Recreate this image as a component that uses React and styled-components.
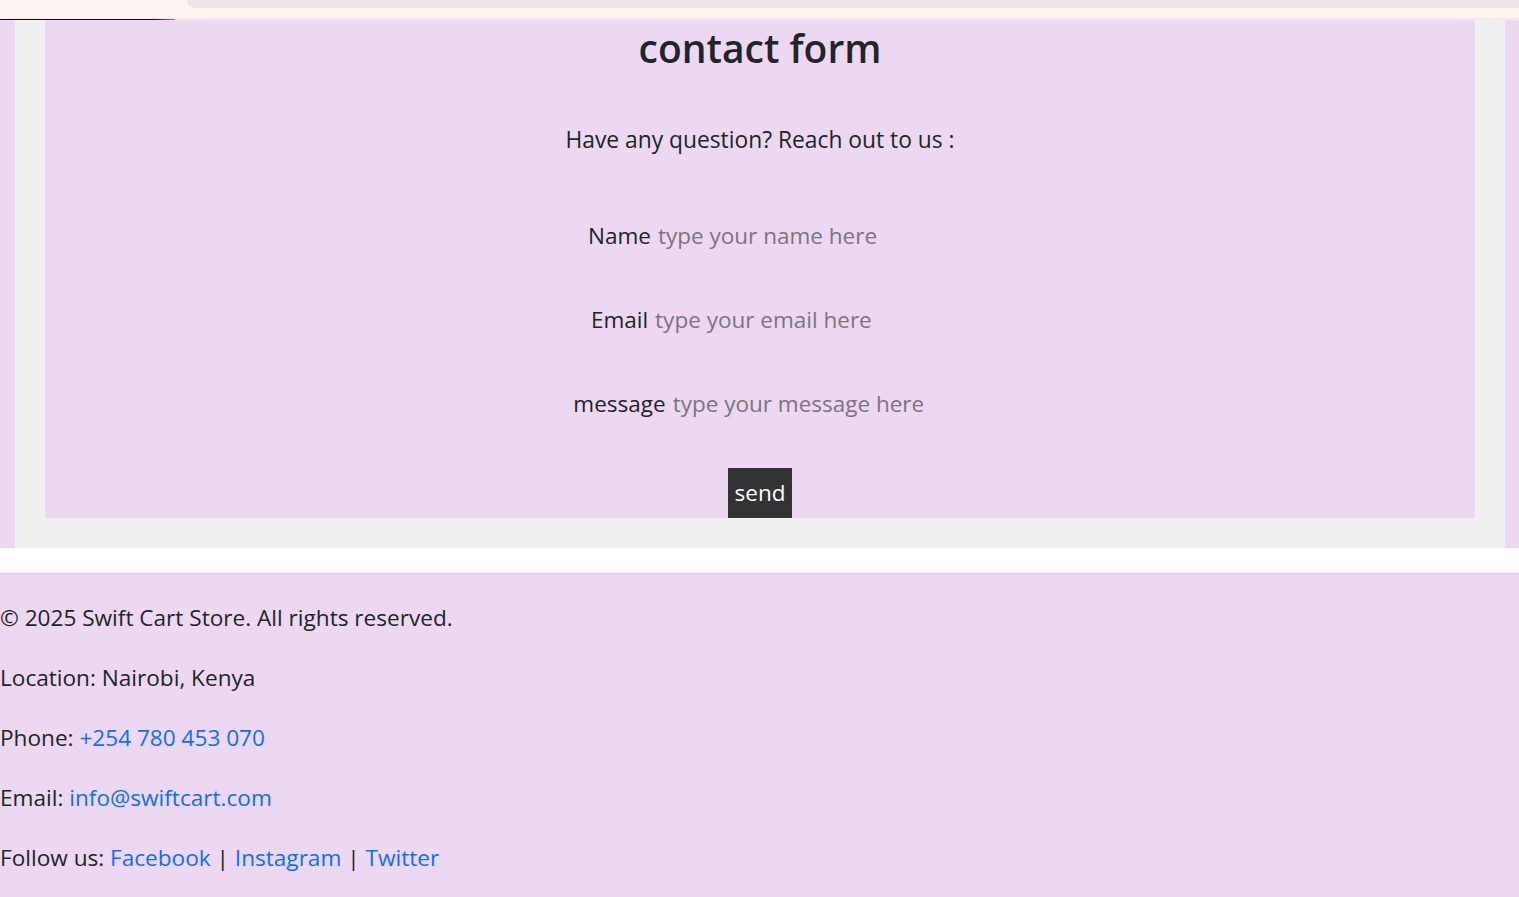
import React from "react";
import styled, { createGlobalStyle } from "styled-components";

const Global = createGlobalStyle`
  html, body { margin: 0; padding: 0; background: #ffffff; }
  body {
    font-family: "Open Sans", "Noto Sans", Arial, sans-serif;
    color: #212529;
  }
  * { box-sizing: border-box; }
`;

const TopBar = styled.header`
  display: flex;
  height: 19px;
  background: #fff5f3;
  border-bottom: 1px solid #f9e3e0;
`;

const TopSpacer = styled.div`
  width: 187px;
`;

const TopPill = styled.div`
  flex: 1;
  height: 8px;
  background: #f1e4e9;
  border-bottom-left-radius: 16px;
`;

const Rule = styled.div`
  display: flex;
  height: 1px;
  background: #eeeeee;
`;

const RuleMark = styled.div`
  width: 175px;
  background: linear-gradient(90deg, #141414 0%, #141414 88%, #b8787c 100%);
`;

const Outer = styled.div`
  background: #ecd8f0;
  padding: 0 14px 0 15px;
`;

const Section = styled.section`
  background: #f0f0f0;
  padding: 0 30px 30px;
`;

const FormBox = styled.form`
  background: #ecd8f0;
  display: flex;
  flex-direction: column;
  align-items: center;
  padding-top: 1px;
`;

const Title = styled.h1`
  margin: 0;
  font-size: 39px;
  line-height: 54px;
  font-weight: 600;
  color: #212529;
`;

const Lead = styled.p`
  margin: 50px 0 66px;
  font-size: 22.8px;
  line-height: 30px;
`;

const Row = styled.div`
  display: flex;
  align-items: baseline;
  justify-content: center;
  height: 30px;
  margin-bottom: ${(p) => (p.$last ? "49px" : "54px")};
`;

const Label = styled.label`
  font-size: 22.5px;
  line-height: 30px;
  margin-right: 5px;
  color: #212529;
`;

const Field = styled.input`
  width: 276px;
  font-family: inherit;
  font-size: 22.5px;
  line-height: 30px;
  padding: 0 2px;
  border: none;
  outline: none;
  background: transparent;
  color: #212529;
  &::placeholder { color: #7a7580; opacity: 1; }
`;

const Send = styled.button`
  font-family: inherit;
  font-size: 22.5px;
  line-height: 30px;
  padding: 10px 7px;
  border: none;
  background: #333333;
  color: #ffffff;
  cursor: pointer;
`;

const Footer = styled.footer`
  margin-top: 25px;
  border-top: 1px solid #dccade;
  background: #ecd8f0;
  padding: 29px 0 30px;
`;

const FootLine = styled.p`
  margin: 0 0 30px;
  font-size: 22.6px;
  line-height: 30px;
  color: #212529;
  &:last-child { margin-bottom: 0; }
`;

const Link = styled.a`
  color: #0d6efd;
  text-decoration: none;
`;

export default function App() {
  return (
    <>
      <Global />
      <TopBar>
        <TopSpacer />
        <TopPill />
      </TopBar>
      <Rule>
        <RuleMark />
      </Rule>
      <Outer>
        <Section>
          <FormBox onSubmit={(e) => e.preventDefault()}>
            <Title>contact form</Title>
            <Lead>Have any question? Reach out to us :</Lead>
            <Row>
              <Label htmlFor="name">Name</Label>
              <Field id="name" type="text" placeholder="type your name here" />
            </Row>
            <Row>
              <Label htmlFor="email">Email</Label>
              <Field id="email" type="email" placeholder="type your email here" />
            </Row>
            <Row $last>
              <Label htmlFor="message">message</Label>
              <Field id="message" type="text" placeholder="type your message here" />
            </Row>
            <Send type="submit">send</Send>
          </FormBox>
        </Section>
      </Outer>
      <Footer>
        <FootLine>© 2025 Swift Cart Store. All rights reserved.</FootLine>
        <FootLine>Location: Nairobi, Kenya</FootLine>
        <FootLine>
          Phone: <Link href="#">+254 780 453 070</Link>
        </FootLine>
        <FootLine>
          Email: <Link href="#">info@swiftcart.com</Link>
        </FootLine>
        <FootLine>
          Follow us: <Link href="#">Facebook</Link> | <Link href="#">Instagram</Link> | <Link href="#">Twitter</Link>
        </FootLine>
      </Footer>
    </>
  );
}
